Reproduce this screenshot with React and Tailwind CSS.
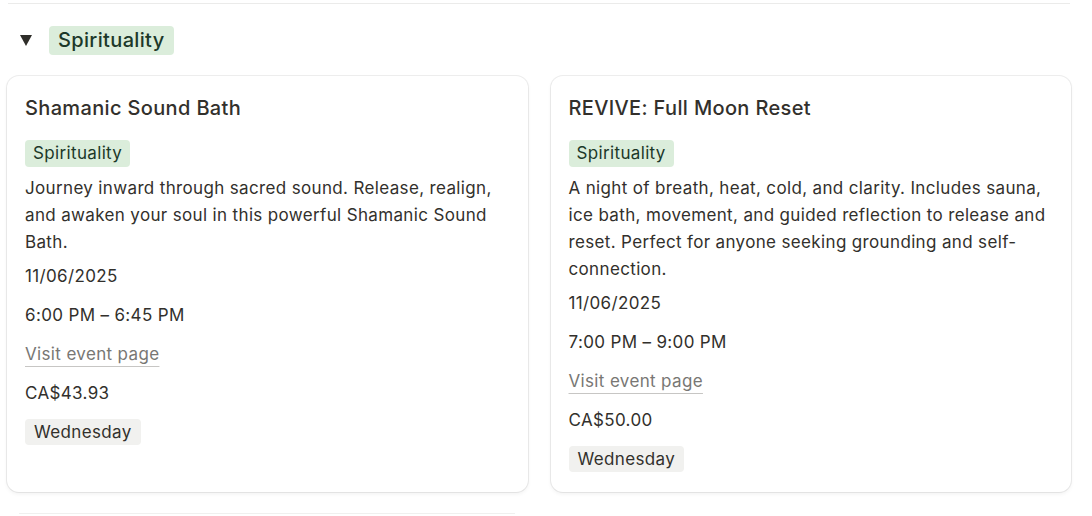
const events = [
  {
    title: "Shamanic Sound Bath",
    desc: "Journey inward through sacred sound. Release, realign, and awaken your soul in this powerful Shamanic Sound Bath.",
    date: "11/06/2025",
    time: "6:00 PM – 6:45 PM",
    price: "CA$43.93",
    day: "Wednesday",
  },
  {
    title: "REVIVE: Full Moon Reset",
    desc: "A night of breath, heat, cold, and clarity. Includes sauna, ice bath, movement, and guided reflection to release and reset. Perfect for anyone seeking grounding and self-connection.",
    date: "11/06/2025",
    time: "7:00 PM – 9:00 PM",
    price: "CA$50.00",
    day: "Wednesday",
  },
];

function Row({ children }) {
  return <div className="pt-[7px] pb-[5px] leading-[27px]">{children}</div>;
}

function EventCard({ ev }) {
  return (
    <div className="rounded-xl bg-white px-[18px] pt-[16px] pb-[14px] shadow-[0_0_0_1px_rgba(15,15,15,0.07),0_2px_4px_rgba(15,15,15,0.06)]">
      <h3 className="text-[20px] leading-[32px] font-medium tracking-[0.35px] text-[#32302c] mb-4">{ev.title}</h3>
      <div className="mb-[8px]">
        <span className="inline-block h-[27px] leading-[27px] px-[8px] rounded bg-[#dbeddb] text-[#1c3829] text-[17px] tracking-[0.35px]">
          Spirituality
        </span>
      </div>
      <p className="text-[17px] leading-[27px] tracking-[0.35px] text-[#32302c]">{ev.desc}</p>
      <div className="text-[17px] tracking-[0.35px] text-[#32302c]">
        <Row>{ev.date}</Row>
        <Row>{ev.time}</Row>
        <Row>
          <a
            href="#"
            className="text-[#787774] underline decoration-[#c7c6c4] underline-offset-[6px] decoration-1"
          >
            Visit event page
          </a>
        </Row>
        <Row>{ev.price}</Row>
        <Row>
          <span className="inline-block h-[26px] leading-[26px] px-[9px] rounded bg-[#f1f1ef] text-[#32302c]">
            {ev.day}
          </span>
        </Row>
      </div>
    </div>
  );
}

export default function App() {
  return (
    <div className="min-h-[516px] bg-white font-['Inter','Noto_Sans',sans-serif] antialiased">
      <div className="pt-[3px] pl-[8px] pr-[22px]">
        <div className="h-px bg-[#ebebea]" />
      </div>

      {/* Group header */}
      <div className="flex items-center pt-[21px] pl-[20px] h-[51px]">
        <svg width="12" height="11" viewBox="0 0 12 11" className="shrink-0">
          <path d="M0 0h12L6 11z" fill="#2f2e2a" />
        </svg>
        <span className="ml-[17px] inline-block h-[29px] leading-[29px] px-[9px] rounded bg-[#dbeddb] text-[#1c3829] text-[20px] font-medium tracking-[0.35px]">
          Spirituality
        </span>
      </div>

      {/* Cards */}
      <div className="grid grid-cols-2 gap-[23px] pl-[7px] pr-[21px] pt-[21px]">
        {events.map((ev) => (
          <EventCard key={ev.title} ev={ev} />
        ))}
      </div>

      <div className="pl-[19px] w-[515px] pt-[21px]">
        <div className="h-px bg-[#f0f0ef]" />
      </div>
    </div>
  );
}
